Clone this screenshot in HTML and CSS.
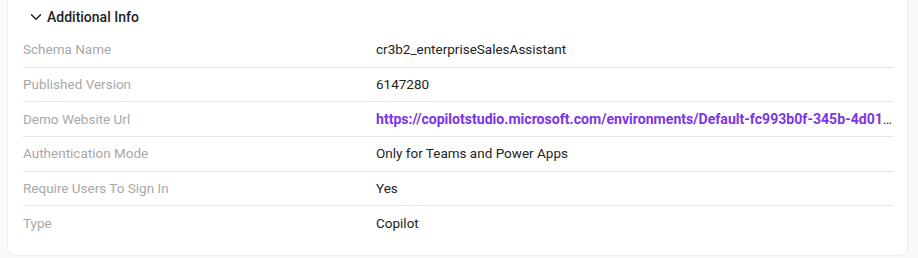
FILE: index.html
```html
<!DOCTYPE html>
<html lang="en">
<head>
  <meta charset="UTF-8">
  <title>Additional Info</title>
  <link rel="stylesheet" href="styles.css">
</head>
<body>

  <div class="info-card">
    <!-- Section header -->
    <div class="info-header">
      <svg class="chevron" width="12" height="12" viewBox="0 0 12 12">
        <path d="M1.5 3.8 L6 8.2 L10.5 3.8" fill="none" stroke="#242424" stroke-width="1.5" stroke-linecap="round" stroke-linejoin="round"/>
      </svg>
      <span>Additional Info</span>
    </div>

    <!-- Properties -->
    <div class="info-list">
      <div class="info-row">
        <div class="info-label">Schema Name</div>
        <div class="info-value">cr3b2_enterpriseSalesAssistant</div>
      </div>
      <div class="info-row">
        <div class="info-label">Published Version</div>
        <div class="info-value">6147280</div>
      </div>
      <div class="info-row">
        <div class="info-label">Demo Website Url</div>
        <div class="info-value">
          <a href="#" class="info-link">https://copilotstudio.microsoft.com/environments/Default-fc993b0f-345b-4d01-9f67-9ac4a140dd43/bots/cr3b2_enterpriseSalesAssistant/webchat</a>
        </div>
      </div>
      <div class="info-row">
        <div class="info-label">Authentication Mode</div>
        <div class="info-value">Only for Teams and Power Apps</div>
      </div>
      <div class="info-row">
        <div class="info-label">Require Users To Sign In</div>
        <div class="info-value">Yes</div>
      </div>
      <div class="info-row">
        <div class="info-label">Type</div>
        <div class="info-value">Copilot</div>
      </div>
    </div>
  </div>

</body>
</html>
```

FILE: styles.css
```css
* {
  box-sizing: border-box;
  margin: 0;
  padding: 0;
}

body {
  font-family: Roboto, 'Liberation Sans', Arial, sans-serif;
  background: #fafafa;
  color: #242424;
  padding: 0 10px 0 7px;
}

.info-card {
  background: #ffffff;
  border: 1px solid #ededed;
  border-radius: 8px;
  margin-top: -10px;
  padding: 10px 14px 14px 15px;
}

.info-header {
  display: flex;
  align-items: center;
  gap: 5px;
  height: 32px;
  padding-left: 7px;
  font-size: 14px;
  font-weight: 500;
  color: #242424;
}

.chevron {
  flex-shrink: 0;
}

.info-row {
  display: grid;
  grid-template-columns: 353px 1fr;
  align-items: center;
  height: 34.7px;
  padding-bottom: 1px;
  border-bottom: 1px solid #e6e6e6;
  font-size: 13.5px;
}

.info-row:last-child {
  border-bottom: none;
}

.info-label {
  color: #a8a8a8;
}

.info-value {
  color: #242424;
  white-space: nowrap;
  overflow: hidden;
  text-overflow: ellipsis;
}

.info-link {
  color: #7c35e6;
  font-size: 14.1px;
  font-weight: 700;
  text-decoration: none;
}
```
